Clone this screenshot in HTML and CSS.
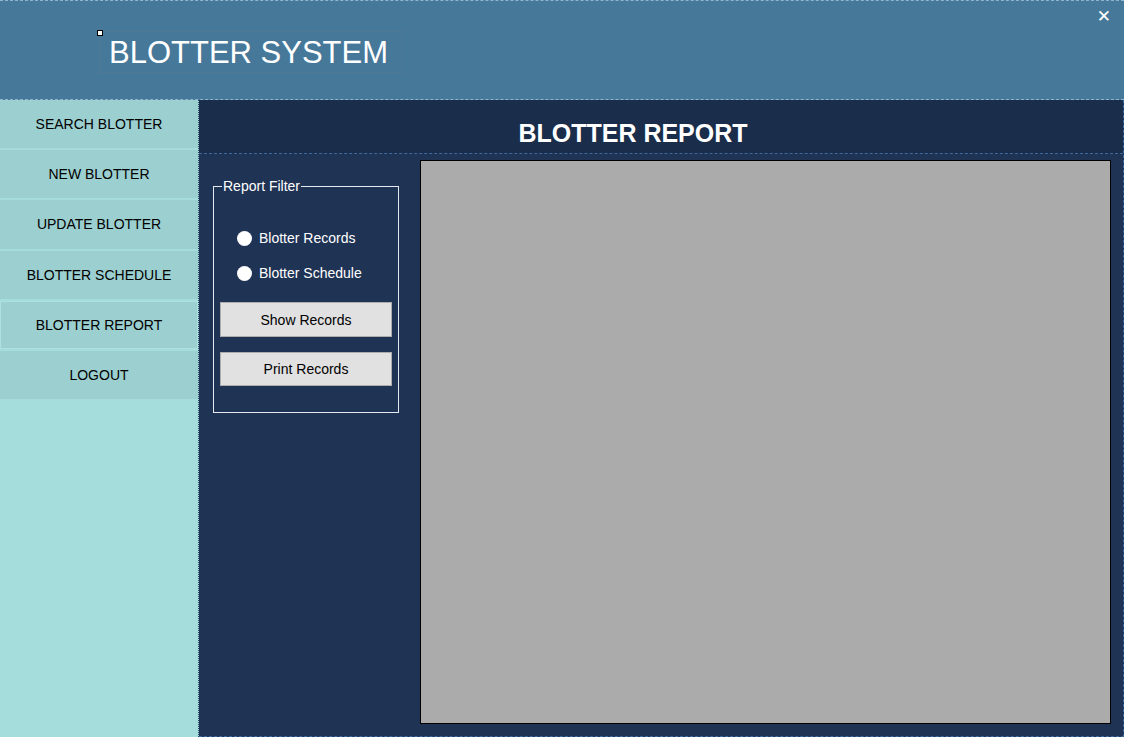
FILE: index.html
```html
<!DOCTYPE html>
<html>
<head>
<meta charset="utf-8">
<link rel="stylesheet" href="styles.css">
</head>
<body>
<div class="window">
  <header class="topbar">
    <div class="brand">
      <span class="handle"></span>
      <h1 class="brand-title">BLOTTER SYSTEM</h1>
    </div>
    <span class="close">✕</span>
  </header>
  <div class="body">
    <nav class="sidebar">
      <div class="nav-btn">SEARCH BLOTTER</div>
      <div class="nav-btn">NEW BLOTTER</div>
      <div class="nav-btn">UPDATE BLOTTER</div>
      <div class="nav-btn">BLOTTER SCHEDULE</div>
      <div class="nav-btn active">BLOTTER REPORT</div>
      <div class="nav-btn">LOGOUT</div>
    </nav>
    <main class="main">
      <div class="title-bar"><h2 class="page-title">BLOTTER REPORT</h2></div>
      <div class="content">
        <fieldset class="filter">
          <legend class="filter-legend">Report Filter</legend>
          <label class="radio"><span class="dot"></span>Blotter Records</label>
          <label class="radio"><span class="dot"></span>Blotter Schedule</label>
          <button class="btn btn-show">Show Records</button>
          <button class="btn btn-print">Print Records</button>
        </fieldset>
        <div class="viewer"></div>
      </div>
    </main>
  </div>
</div>
</body>
</html>
```

FILE: styles.css
```css
* { box-sizing: border-box; }
html, body { margin: 0; padding: 0; }
body {
  width: 1124px;
  height: 737px;
  overflow: hidden;
  font-family: "Liberation Sans", Arial, sans-serif;
  background: #1f3355;
}
.window {
  width: 1124px;
  height: 737px;
  display: flex;
  flex-direction: column;
}
.topbar {
  height: 100px;
  flex: none;
  background: #467899;
  border-top: 1px dashed #8fb5cf;
  border-bottom: 1px dashed #8fb5cf;
  position: relative;
  padding: 30px 0 0 97px;
}
.brand {
  position: relative;
  width: 304px;
  height: 42px;
  margin-left: 2px;
  border: 1px dotted #587891;
}
.handle {
  position: absolute;
  left: -3px;
  top: -2px;
  width: 6px;
  height: 6px;
  background: #fff;
  border: 1px solid #000;
}
.brand-title {
  margin: 0;
  padding: 5px 0 0 9px;
  font-weight: normal;
  font-size: 31px;
  line-height: 32px;
  color: #fff;
}
.close {
  position: absolute;
  right: 13px;
  top: 5px;
  color: #fff;
  font-size: 17px;
  font-weight: bold;
  font-family: "DejaVu Sans", sans-serif;
}
.body {
  flex: 1;
  display: flex;
  min-height: 0;
}
.sidebar {
  width: 199px;
  flex: none;
  background: #a5dcdc;
  border-right: 1px dotted #2b4a66;
  display: flex;
  flex-direction: column;
  gap: 2px;
}
.nav-btn {
  height: 48.2px;
  background: #9ccfcf;
  color: #000;
  font-size: 14px;
  display: flex;
  align-items: center;
  justify-content: center;
}
.nav-btn.active {
  border: 1px solid #aee0e0;
}
.main {
  flex: 1;
  display: flex;
  flex-direction: column;
  border-bottom: 1px dashed #3c6aa0;
  border-right: 1px dashed #3c6aa0;
}
.title-bar {
  height: 54px;
  flex: none;
  background: #1a2d4a;
  border-bottom: 1px dashed #3c6aa0;
  padding-right: 56px;
  display: flex;
  justify-content: center;
  align-items: flex-end;
}
.page-title {
  margin: 0 0 5px 0;
  color: #fff;
  font-size: 25px;
  font-weight: bold;
  line-height: 29px;
}
.content {
  flex: 1;
  display: flex;
  padding: 6px 12px 12px 14px;
}
.filter {
  width: 186px;
  height: 235px;
  margin: 18px 0 0 0;
  padding: 36px 6px 0 6px;
  border: 1px solid #e6e9ee;
  display: flex;
  flex-direction: column;
  align-items: stretch;
}
.filter-legend {
  color: #fff;
  font-size: 14px;
  line-height: 16px;
  padding: 0 1px;
  margin-left: 2px;
}
.radio {
  color: #fff;
  font-size: 14px;
  display: flex;
  align-items: center;
  height: 16px;
  padding-left: 17px;
  margin-bottom: 19px;
}
.radio + .radio { margin-bottom: 21px; }
.dot {
  width: 15px;
  height: 15px;
  border-radius: 50%;
  background: #fff;
  margin-right: 7px;
  flex: none;
}
.btn {
  height: 35px;
  background: #e1e1e1;
  border: 1px solid #adadad;
  font-family: "Liberation Sans", Arial, sans-serif;
  font-size: 14px;
  color: #000;
  padding: 0;
}
.btn-print { margin-top: 15px; height: 34px; }
.viewer {
  flex: 1;
  margin-left: 21px;
  background: #ababab;
  border: 1px solid #000;
}
```
